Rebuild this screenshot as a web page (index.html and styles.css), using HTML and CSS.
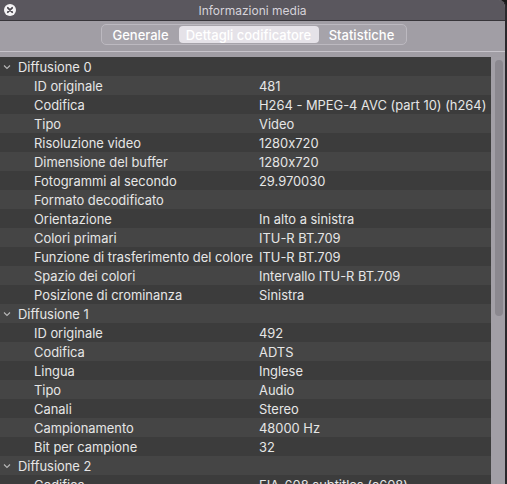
FILE: index.html
```html
<!DOCTYPE html>
<html lang="it">
<head>
<meta charset="utf-8">
<title>Informazioni media</title>
<link rel="stylesheet" href="styles.css">
</head>
<body>
<div class="window">
  <div class="titlebar">
    <span class="close"><svg width="12" height="12" viewBox="0 0 12 12"><circle cx="6" cy="6" r="6" fill="#f4f3f5"/><path d="M3.8 3.8 L8.2 8.2 M8.2 3.8 L3.8 8.2" stroke="#4a474e" stroke-width="1.8" stroke-linecap="round"/></svg></span>
    <span class="title">Informazioni media</span>
  </div>
  <div class="toolbar">
    <div class="segmented">
      <span class="seg seg-1">Generale</span>
      <span class="seg seg-2 active">Dettagli codificatore</span>
      <span class="seg seg-3">Statistiche</span>
    </div>
  </div>
  <div class="body">
    <div class="list">
      <div class="row group"><span class="chev"><svg width="8" height="6" viewBox="0 0 8 6"><path d="M1 1.5 L4 4.5 L7 1.5" fill="none" stroke="#b8b8b8" stroke-width="1.1"/></svg></span><span class="label">Diffusione 0</span></div>
      <div class="row"><span class="label">ID originale</span><span class="value">481</span></div>
      <div class="row"><span class="label">Codifica</span><span class="value">H264 - MPEG-4 AVC (part 10) (h264)</span></div>
      <div class="row"><span class="label">Tipo</span><span class="value">Video</span></div>
      <div class="row"><span class="label">Risoluzione video</span><span class="value">1280x720</span></div>
      <div class="row"><span class="label">Dimensione del buffer</span><span class="value">1280x720</span></div>
      <div class="row"><span class="label">Fotogrammi al secondo</span><span class="value">29.970030</span></div>
      <div class="row"><span class="label">Formato decodificato</span><span class="value"></span></div>
      <div class="row"><span class="label">Orientazione</span><span class="value">In alto a sinistra</span></div>
      <div class="row"><span class="label">Colori primari</span><span class="value">ITU-R BT.709</span></div>
      <div class="row"><span class="label">Funzione di trasferimento del colore</span><span class="value">ITU-R BT.709</span></div>
      <div class="row"><span class="label">Spazio dei colori</span><span class="value">Intervallo ITU-R BT.709</span></div>
      <div class="row"><span class="label">Posizione di crominanza</span><span class="value">Sinistra</span></div>
      <div class="row group"><span class="chev"><svg width="8" height="6" viewBox="0 0 8 6"><path d="M1 1.5 L4 4.5 L7 1.5" fill="none" stroke="#b8b8b8" stroke-width="1.1"/></svg></span><span class="label">Diffusione 1</span></div>
      <div class="row"><span class="label">ID originale</span><span class="value">492</span></div>
      <div class="row"><span class="label">Codifica</span><span class="value">ADTS</span></div>
      <div class="row"><span class="label">Lingua</span><span class="value">Inglese</span></div>
      <div class="row"><span class="label">Tipo</span><span class="value">Audio</span></div>
      <div class="row"><span class="label">Canali</span><span class="value">Stereo</span></div>
      <div class="row"><span class="label">Campionamento</span><span class="value">48000 Hz</span></div>
      <div class="row"><span class="label">Bit per campione</span><span class="value">32</span></div>
      <div class="row group"><span class="chev"><svg width="8" height="6" viewBox="0 0 8 6"><path d="M1 1.5 L4 4.5 L7 1.5" fill="none" stroke="#b8b8b8" stroke-width="1.1"/></svg></span><span class="label">Diffusione 2</span></div>
      <div class="row"><span class="label">Codifica</span><span class="value">EIA-608 subtitles (c608)</span></div>
    </div>
    <div class="scrolltrack"><div class="thumb"></div></div>
  </div>
</div>
</body>
</html>
```
FILE: styles.css
```css
html, body {
  margin: 0;
  padding: 0;
  background: #1a1a1a;
}
body {
  font-family: Inter, "Liberation Sans", Arial, sans-serif;
  font-size: 13px;
  font-feature-settings: "calt" 0;
  font-variant-ligatures: no-contextual;
  width: 507px;
  height: 484px;
  overflow: hidden;
}
.window {
  width: 505px;
  height: 484px;
  border-right: 2px solid #2a282c;
  border-radius: 0 8px 0 0;
  overflow: hidden;
  display: flex;
  flex-direction: column;
  background: #a19ea5;
}
.titlebar {
  height: 20px;
  background: #5a575e;
  border-bottom: 1px solid #37353a;
  display: flex;
  align-items: center;
  position: relative;
  flex: none;
}
.close {
  width: 12px;
  height: 12px;
  margin-left: 4px;
  display: flex;
}
.title {
  position: absolute;
  left: 0;
  right: 0;
  text-align: center;
  color: #d6d3da;
  font-size: 12px;
  top: 3px;
}
.toolbar {
  height: 31px;
  flex: none;
  display: flex;
  justify-content: center;
  align-items: flex-start;
  border-bottom: 1px solid #c7c4cb;
  box-sizing: border-box;
  padding-top: 3px;
}
.segmented {
  margin-left: 2px;
  width: 306px;
  height: 21px;
  box-sizing: border-box;
  border: 1px solid #bcb9c0;
  border-radius: 5px;
  background: #a6a3aa;
  display: flex;
  align-items: stretch;
  padding: 1px;
}
.seg {
  display: flex;
  align-items: center;
  justify-content: center;
  color: #ffffff;
  font-size: 13px;
  font-weight: 500;
}
.seg-1 { width: 76px; }
.seg-2 { width: 140px; }
.seg-3 { flex: 1; }
.seg.active {
  background: #e5e2e8;
  border-radius: 4px;
}
.body {
  flex: 1;
  display: flex;
  margin-top: 5px;
  min-height: 0;
}
.list {
  width: 491px;
  background: #404040;
  overflow: hidden;
}
.row {
  height: 19px;
  display: grid;
  grid-template-columns: 259px 1fr;
  align-items: center;
  color: #e6e6e6;
  font-size: 12.9px;
  white-space: nowrap;
  padding-top: 1px;
  box-sizing: border-box;
}
.row:nth-child(odd) { background: #3c3c3c; }
.row:nth-child(even) { background: #454545; }
.row .label { padding-left: 34px; }
.row.group {
  grid-template-columns: 18px 1fr;
}
.row.group .label { padding-left: 0; }
.chev {
  display: flex;
  padding-left: 3px;
}
.scrolltrack {
  flex: 1;
  background: #a29fa6;
  padding: 3px 0 0 4px;
}
.thumb {
  width: 8px;
  height: 256px;
  border-radius: 4px;
  background: #8b888f;
}
```
